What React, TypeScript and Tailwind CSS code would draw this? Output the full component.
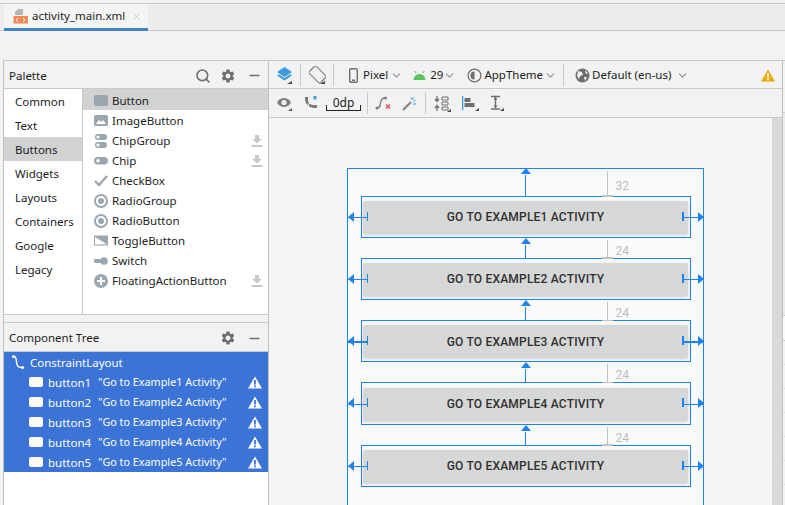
import { ChevronDown, Minus, Search, X } from "lucide-react";
import { MdSettings } from "react-icons/md";
import type { ReactNode } from "react";

const categories = ["Common", "Text", "Buttons", "Widgets", "Layouts", "Containers", "Google", "Legacy"];

function Corner() {
  return <path d="M16 16h-4l4-3z" fill="#555" />;
}

function Ico({ w = 16, h = 16, vb = "0 0 16 16", children, className = "" }: { w?: number; h?: number; vb?: string; children: ReactNode; className?: string }) {
  return (
    <svg width={w} height={h} viewBox={vb} className={`shrink-0 ${className}`}>
      {children}
    </svg>
  );
}

const G = "#9aa7b0";

const paletteIcons: Record<string, ReactNode> = {
  Button: <rect x="1" y="2" width="14" height="11" rx="2" fill={G} />,
  ImageButton: (
    <>
      <rect x="1" y="2" width="14" height="11" rx="1.5" fill={G} />
      <path d="M3 11l3-4 2 2 2-2 3 4z" fill="#fff" />
    </>
  ),
  ChipGroup: (
    <>
      <rect x="2" y="1" width="12" height="6" rx="3" fill={G} />
      <rect x="2" y="9" width="12" height="6" rx="3" fill={G} />
      <circle cx="5" cy="4" r="1.6" fill="#fff" />
      <circle cx="5" cy="12" r="1.6" fill="#fff" />
    </>
  ),
  Chip: (
    <>
      <rect x="1" y="4" width="14" height="7.5" rx="3.7" fill={G} />
      <circle cx="5" cy="7.7" r="1.8" fill="#fff" />
    </>
  ),
  CheckBox: <path d="M2 8l4 4 8-9" fill="none" stroke={G} strokeWidth="2.4" />,
  RadioGroup: (
    <>
      <circle cx="8" cy="8" r="6" fill="none" stroke={G} strokeWidth="2" />
      <circle cx="8" cy="8" r="3" fill={G} />
    </>
  ),
  RadioButton: (
    <>
      <circle cx="8" cy="8" r="6" fill="none" stroke={G} strokeWidth="2" />
      <circle cx="8" cy="8" r="3" fill={G} />
    </>
  ),
  ToggleButton: <path d="M1 2.5h14v10H1z M2 4v7.5l12-0.2z" fillRule="evenodd" fill={G} />,
  Switch: (
    <>
      <rect x="1" y="6" width="7" height="4" rx="1" fill={G} />
      <circle cx="11" cy="8" r="3.8" fill={G} />
    </>
  ),
  FloatingActionButton: (
    <>
      <circle cx="8" cy="8" r="7" fill={G} />
      <path d="M8 4v8M4 8h8" stroke="#fff" strokeWidth="2" />
    </>
  ),
};

const paletteItems = [
  { name: "Button" },
  { name: "ImageButton" },
  { name: "ChipGroup", download: true },
  { name: "Chip", download: true },
  { name: "CheckBox" },
  { name: "RadioGroup" },
  { name: "RadioButton" },
  { name: "ToggleButton" },
  { name: "Switch" },
  { name: "FloatingActionButton", download: true },
];

function DownloadIcon() {
  return (
    <Ico w={12} h={14} vb="0 0 12 14" className="ml-auto mr-[5px]">
      <path d="M4 1h4v4h3L6 9.5 1 5h3z" fill="#c3c9cc" />
      <rect x="0.5" y="11" width="11" height="2" fill="#c3c9cc" />
    </Ico>
  );
}

function Warn() {
  return (
    <Ico w={14} h={13} vb="0 0 14 13">
      <path d="M7 0.5L14 12.5H0z" fill="#fff" />
      <rect x="6.1" y="4" width="1.8" height="4.6" fill="#3b73d6" />
      <rect x="6.1" y="9.5" width="1.8" height="1.8" fill="#3b73d6" />
    </Ico>
  );
}

function HeaderActions({ search = false }: { search?: boolean }) {
  return (
    <div className="ml-auto flex items-center text-[#6e6e6e]">
      {search && <Search size={16} strokeWidth={2.4} className="mr-[9px]" />}
      <MdSettings size={16} className="mr-[11px]" />
      <Minus size={15} strokeWidth={2.4} className="mr-[6px]" />
    </div>
  );
}

function Sep({ ml, mr }: { ml: number; mr: number }) {
  return <div className="h-[22px] w-px bg-[#c9c9c9] shrink-0" style={{ marginLeft: ml, marginRight: mr }} />;
}

function Chev({ className = "" }: { className?: string }) {
  return <ChevronDown size={13} strokeWidth={2} className={`text-[#8c9499] shrink-0 ${className}`} />;
}

function TopToolbar() {
  return (
    <div className="h-[28px] flex items-center border-b border-[#c9c9c9] shrink-0 pl-[7px] pt-px">
      <Ico w={17} h={18} vb="0 0 17 18">
        <path d="M8.5 1l7.5 5-7.5 5L1 6z" fill="#3d9be0" />
        <path d="M1 9.5l7.5 5 7.5-5-1.8-1.2-5.700 3.800-5.700-3.800z" fill="#3d9be0" />
        <path d="M16 18h-5l5-3z" fill="#444" />
      </Ico>
      <Sep ml={7} mr={8} />
      <Ico w={17} h={18} vb="0 0 17 18">
        <rect x="3.500" y="0.500" width="10" height="16" rx="1.500" transform="rotate(-45 8.500 8.500)" fill="none" stroke="#7d7d7d" strokeWidth="1.100" />
        <path d="M1.500 5a8 8 0 0 1 3.500-3.500M15.500 12a8 8 0 0 1-3.500 3.500" fill="none" stroke="#7d7d7d" />
        <path d="M16 18h-5l5-3z" fill="#444" />
      </Ico>
      <Sep ml={7} mr={15} />
      <Ico w={9} h={15} vb="0 0 9 15">
        <rect x="0.700" y="0.700" width="7.600" height="13.600" rx="1.200" fill="none" stroke="#6e6e6e" strokeWidth="1.400" />
        <rect x="3" y="11.500" width="3" height="1.500" fill="#6e6e6e" />
      </Ico>
      <span className="ml-[5px]">Pixel</span>
      <Chev className="ml-[2px]" />
      <Ico w={13} h={11} vb="0 0 13 11" className="ml-[10px]">
        <path d="M0.500 10a6 6 0 0 1 12 0z" fill="#5cc45c" />
        <path d="M3 3L1.800 1M10 3l1.200-2" stroke="#5cc45c" />
      </Ico>
      <span className="ml-[4px]">29</span>
      <Chev />
      <Ico w={15} h={15} vb="0 0 15 15" className="ml-[11px]">
        <circle cx="7.500" cy="7.500" r="6.400" fill="none" stroke="#6e6e6e" strokeWidth="1.200" />
        <path d="M7.500 3.500a4 4 0 0 0 0 8z" fill="#6e6e6e" />
      </Ico>
      <span className="ml-[2px]">AppTheme</span>
      <Chev className="ml-px" />
      <Sep ml={6} mr={11} />
      <Ico w={15} h={15} vb="0 0 15 15">
        <circle cx="7.500" cy="7.500" r="7" fill="#6e6e6e" />
        <path d="M3 3l4 1 1 3-3 1-1 3-2-3zM10 2l3 3-2 1zM9 9l3 0-2 4z" fill="#f2f2f2" />
      </Ico>
      <span className="ml-[2px]">Default (en-us)</span>
      <Chev className="ml-[5px]" />
      <Ico w={14} h={13} vb="0 0 14 13" className="ml-auto mr-[7px]">
        <path d="M7 0.500L14 12.500H0z" fill="#f0a30a" />
        <rect x="6.100" y="4" width="1.800" height="4.600" fill="#fff" />
        <rect x="6.100" y="9.500" width="1.800" height="1.800" fill="#fff" />
      </Ico>
    </div>
  );
}

function SecondToolbar() {
  return (
    <div className="h-[29px] flex items-center border-b border-[#c9c9c9] shrink-0 pl-[7px]">
      <Ico w={16} h={16}>
        <path d="M1 7.500c2-3.500 4.500-4.500 7-4.500s5 1 7 4.500c-2 3.500-4.500 4.500-7 4.500s-5-1-7-4.500z" fill="#7d7d7d" />
        <circle cx="8" cy="7.500" r="2.600" fill="#f2f2f2" />
        <Corner />
      </Ico>
      <Ico w={16} h={16} className="ml-[11px]">
        <path d="M2 2h3v3a5 5 0 0 0 5 5h2v3h-2A10 10 0 0 1 2 5z" fill="#7d7d7d" />
        <path d="M2 15L11 1" stroke="#f2f2f2" strokeWidth="1.200" />
        <rect x="10.500" y="1" width="3" height="3.500" fill="#3d9be0" />
        <rect x="12" y="10" width="2" height="3" fill="#7d7d7d" />
      </Ico>
      <div className="ml-[7px] w-[35px] h-[15px] relative text-center leading-[13px] text-[12px] border-b border-[#222]">
        0dp
        <span className="absolute left-0 bottom-0 h-[5px] w-px bg-[#222]" />
        <span className="absolute right-0 bottom-0 h-[5px] w-px bg-[#222]" />
      </div>
      <Sep ml={6} mr={7} />
      <Ico w={18} h={16} vb="0 0 18 16">
        <path d="M2 13c3 0 3-2 3.500-5S7 3 10 3" fill="none" stroke="#7d7d7d" strokeWidth="1.400" />
        <circle cx="2" cy="13" r="1.500" fill="#7d7d7d" />
        <circle cx="10.500" cy="3" r="1.500" fill="#7d7d7d" />
        <path d="M11 9.500l4 4M15 9.500l-4 4" stroke="#e05555" strokeWidth="1.500" />
      </Ico>
      <Ico w={15} h={15} vb="0 0 15 15" className="ml-[9px]">
        <path d="M1 14L9 6" stroke="#8a8a8a" strokeWidth="2.400" />
        <path d="M11 1v3M13.500 4l-2 1.500M14 8h-3M9 1.500l0.500 2" stroke="#3d9be0" strokeWidth="1" />
      </Ico>
      <Sep ml={8} mr={8} />
      <Ico w={17} h={17} vb="0 0 17 17">
        <path d="M3 1v5M1 4l2 2.500L5 4M3 16v-5M1 13l2-2.500L5 13" fill="none" stroke="#6e6e6e" strokeWidth="1.300" />
        <path d="M8 2h6v3H8zM8 7h6v3H8zM8 12h6v3H8z" fill="none" stroke="#6e6e6e" />
        <path d="M17 17h-4l4-3z" fill="#444" />
      </Ico>
      <Ico w={18} h={16} vb="0 0 18 16" className="ml-[10px]">
        <rect x="1" y="1" width="1.300" height="14" fill="#3d9be0" />
        <rect x="3.500" y="3" width="6" height="4" fill="#6e6e6e" />
        <rect x="3.500" y="8" width="10" height="4" fill="#6e6e6e" />
        <path d="M18 16h-4l4-3z" fill="#444" />
      </Ico>
      <Ico w={14} h={16} vb="0 0 14 16" className="ml-[11px]">
        <path d="M1 1.500h9M1 14h9M5.500 2v11M4 4h3M4 11h3" fill="none" stroke="#6e6e6e" strokeWidth="1.400" />
        <path d="M14 16h-4l4-3z" fill="#444" />
      </Ico>
    </div>
  );
}

function BlueprintButton({ n, margin }: { n: number; margin: number }) {
  return (
    <div className="relative h-[42.3px] mb-[20px] border-[1.5px] border-[#1e82f0] flex items-center justify-center px-[1.5px]">
      <div className="w-full h-[33px] mt-px rounded-[2px] bg-[#d6d7d7] shadow-[0_1px_3px_rgba(0,0,0,0.18)] flex items-center justify-center font-['Roboto',sans-serif] font-medium text-[12px] tracking-[0.2px] text-[#2f2f2f]">
        GO TO EXAMPLE{n} ACTIVITY
      </div>
      {/* margin guide */}
      <div className="absolute left-[240px] w-[11px] -top-[1.5px] h-[1.5px] bg-[#c2c2c2]" />
      <div className="absolute left-[245px] bottom-full w-[1.5px] bg-[#c2c2c2]" style={{ height: margin === 32 ? 26 : 19 }} />
      <span className="absolute left-[254px] font-['Roboto',sans-serif] text-[12px] leading-none text-[#bdbdbd]" style={{ top: margin === 32 ? -17 : -14 }}>
        {margin}
      </span>
      {/* top constraint */}
      <div className="absolute left-[163px] bottom-full w-[1.5px] bg-[#1e82f0]" style={{ height: margin === 32 ? 22 : 14 }} />
      <svg width="10" height="6" viewBox="0 0 10 6" className="absolute left-[159px]" style={{ top: margin === 32 ? -29 : -21 }}>
        <path d="M5 0l5 6H0z" fill="#1e82f0" />
      </svg>
      {/* left constraint */}
      <div className="absolute -left-[14px] w-[20px] h-[1.5px] bg-[#1e82f0] top-1/2" />
      <div className="absolute left-[5px] w-[1.5px] h-[9px] bg-[#1e82f0] top-[15px]" />
      <svg width="6" height="10" viewBox="0 0 6 10" className="absolute -left-[14px] top-[15px]">
        <path d="M0 5l6-5v10z" fill="#1e82f0" />
      </svg>
      {/* right constraint */}
      <div className="absolute -right-[14px] w-[20px] h-[1.5px] bg-[#1e82f0] top-1/2" />
      <div className="absolute right-[6px] w-[1.5px] h-[9px] bg-[#1e82f0] top-[15px]" />
      <svg width="6" height="10" viewBox="0 0 6 10" className="absolute -right-[14px] top-[15px]">
        <path d="M6 5L0 0v10z" fill="#1e82f0" />
      </svg>
    </div>
  );
}

export default function App() {
  return (
    <div className="w-[785px] h-[505px] overflow-hidden bg-[#f2f2f2] flex flex-col pt-[3px] font-['Noto_Sans','Open_Sans','Liberation_Sans',sans-serif] text-[11.5px] text-[#1c1c1c]">
      {/* tab strip */}
      <div className="h-[28px] shrink-0 border-t border-b border-[#c9c9c9] bg-[#ececec] pl-[4px] flex">
        <div className="w-[144px] bg-[#f4f4f4] border-b-[3px] border-[#4083c9] flex items-center pl-[9px] -mb-px">
          <Ico w={15} h={16} vb="0 0 15 16">
            <path d="M5 1h5v6H2V4z" fill="#b5b5b5" />
            <rect x="0.500" y="8" width="14.500" height="7.500" fill="#f0885a" />
            <path d="M5 10l-2 1.800 2 1.800M10 10l2 1.800-2 1.800" fill="none" stroke="#fff" strokeWidth="1" />
          </Ico>
          <span className="ml-[4px]">activity_main.xml</span>
          <X size={11} strokeWidth={1.5} className="ml-[6px] text-[#bdbdbd]" />
        </div>
      </div>
      {/* empty toolbar */}
      <div className="h-[29px] shrink-0" />
      <div className="flex-1 min-h-0 flex border-t border-[#c9c9c9] ml-[3px]">
        {/* left side */}
        <div className="w-[266px] shrink-0 flex flex-col border-l border-r border-[#c2c2c2]">
          <div className="h-[28px] shrink-0 flex items-center pl-[5px] pt-[2px] border-b border-[#c9c9c9]">
            Palette
            <HeaderActions search />
          </div>
          <div className="h-[226px] shrink-0 flex bg-white border-b border-[#c9c9c9]">
            <div className="w-[79px] shrink-0 border-r border-[#c9c9c9]">
              {categories.map((c) => (
                <div key={c} className={`h-[24px] flex items-center pl-[11px] pt-[2px] ${c === "Buttons" ? "bg-[#d2d2d2]" : ""}`}>
                  {c}
                </div>
              ))}
            </div>
            <div className="flex-1">
              {paletteItems.map((p) => (
                <div key={p.name} className={`flex items-center pl-[10px] pt-[2px] ${p.name === "Button" ? "h-[21px] bg-[#d2d2d2]" : "h-[20px]"}`}>
                  <Ico w={16} h={16} className="mr-[3px]">
                    {paletteIcons[p.name]}
                  </Ico>
                  {p.name}
                  {p.download && <DownloadIcon />}
                </div>
              ))}
            </div>
          </div>
          <div className="h-[8px] shrink-0 border-b border-[#c9c9c9]" />
          <div className="h-[29px] shrink-0 flex items-center pl-[5px] pt-[2px] border-b border-[#c9c9c9]">
            Component Tree
            <HeaderActions />
          </div>
          <div className="flex-1 bg-white">
            <div className="bg-[#3b73d6] text-white h-[120px]">
              <div className="h-[20px] flex items-center pl-[7px] pt-[2px]">
                <Ico w={16} h={16} className="-mt-[3px]">
                  <path d="M2.500 2.500c3 0 2.500 2 3 5.500s1 5.500 5 5.500" fill="none" stroke="#fff" strokeWidth="1.400" />
                  <circle cx="2.500" cy="2.500" r="1.600" fill="#fff" />
                  <circle cx="11.500" cy="13.500" r="1.600" fill="#fff" />
                </Ico>
                <span className="ml-[3px]">ConstraintLayout</span>
              </div>
              {[1, 2, 3, 4, 5].map((n) => (
                <div key={n} className="h-[20px] flex items-center pl-[25px] pr-[6px] pt-[2px]">
                  <span className="w-[14px] h-[10px] -mt-[2px] rounded-[2px] bg-white shrink-0" />
                  <span className="w-[50px] ml-[5px] shrink-0">button{n}</span>
                  <span className="text-[10.8px] -mt-[2px]">"Go to Example{n} Activity"</span>
                  <span className="ml-auto -mt-[2px]">
                    <Warn />
                  </span>
                </div>
              ))}
            </div>
          </div>
        </div>
        {/* design surface */}
        <div className="flex-1 min-w-0 flex flex-col border-r border-[#c2c2c2]">
          <TopToolbar />
          <SecondToolbar />
          <div className="flex-1 min-h-0 flex bg-[#f5f5f5]">
            <div className="flex-1 pt-[50px] pl-[78px]">
              <div className="w-[357px] h-[400px] border-[1.5px] border-[#1e82f0] bg-[#fafafa] pt-[26.5px] pl-[12.5px] pr-[12.5px]">
                <BlueprintButton n={1} margin={32} />
                <BlueprintButton n={2} margin={24} />
                <BlueprintButton n={3} margin={24} />
                <BlueprintButton n={4} margin={24} />
                <BlueprintButton n={5} margin={24} />
              </div>
            </div>
            <div className="w-[10px] shrink-0 bg-[#d9d9d9]" />
          </div>
        </div>
        {/* clipped window behind, only its row ticks show */}
        <div className="w-[2px] shrink-0 flex flex-col">
          <div className="h-[52px] border-b border-[#d0d0d0]" />
          <div className="h-[203px] bg-[#ebebeb] border-b border-[#c2c2c2]" />
          <div className="h-[25px] bg-[#fafafa] border-b border-[#c2c2c2]" />
          {[364, 388, 412, 436, 460, 484].map((y) => (
            <div key={y} className="h-[24px] shrink-0 border-b border-[#dddddd]" />
          ))}
        </div>
      </div>
    </div>
  );
}
